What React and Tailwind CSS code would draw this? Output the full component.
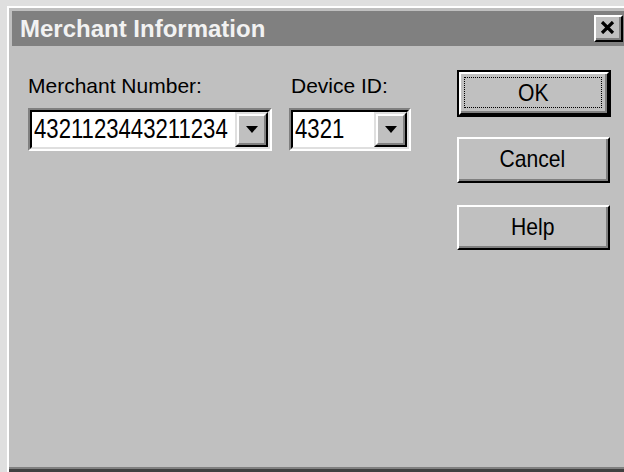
import React from 'react';

const sans = { fontFamily: '"Liberation Sans", Arial, sans-serif' };

function DropArrow() {
  return (
    <div className="flex h-full w-[33px] shrink-0 items-center justify-center border-t-2 border-l-2 border-t-[#dfdfdf] border-l-[#dfdfdf] border-b-2 border-r-2 border-b-black border-r-black bg-[#c0c0c0]">
      <div className="flex h-full w-full items-center justify-center border-t-2 border-l-2 border-t-white border-l-white border-b-2 border-r-2 border-b-[#808080] border-r-[#808080]">
        <svg width="12" height="7" viewBox="0 0 12 7">
          <polygon points="0,0 12,0 6,7" fill="#000" />
        </svg>
      </div>
    </div>
  );
}

function Combo({ value, width }) {
  return (
    <div className={`${width} h-[43px] border-t-2 border-l-2 border-t-[#808080] border-l-[#808080] border-b-2 border-r-2 border-b-white border-r-white`}>
      <div className="flex h-full border-t-2 border-l-2 border-t-black border-l-black border-b-2 border-r-2 border-b-[#dfdfdf] border-r-[#dfdfdf] bg-white">
        <div className="flex flex-1 items-center overflow-hidden pl-[2px]">
          <span className="inline-block origin-left scale-x-[0.82] text-[27px] leading-none text-black">{value}</span>
        </div>
        <DropArrow />
      </div>
    </div>
  );
}

function PushButton({ label, isDefault, className }) {
  const face = (
    <div className="flex h-full w-full border-t-2 border-l-2 border-t-white border-l-white border-b-2 border-r-2 border-b-black border-r-black bg-[#c0c0c0]">
      <div className="flex h-full w-full border-b-2 border-r-2 border-b-[#808080] border-r-[#808080] p-[3px]">
        <div className={`flex h-full w-full items-center justify-center ${isDefault ? 'border border-dotted border-black' : ''}`}>
          <span className="inline-block scale-x-[0.88] text-[24px] leading-none text-black">{label}</span>
        </div>
      </div>
    </div>
  );
  if (isDefault) {
    return <div className={`w-[154px] border-2 border-black ${className}`}>{face}</div>;
  }
  return <div className={`w-[153px] ${className}`}>{face}</div>;
}

export default function App() {
  return (
    <div className="h-[472px] w-[624px] overflow-hidden bg-[#dfdfdf] pl-[7px] pt-[6px]" style={sans}>
      <div className="flex h-[466px] w-[640px] flex-col border-t-2 border-l-2 border-white bg-[#c0c0c0] pl-[3px] pt-[3px] shadow-[inset_0_-3px_0_#404040,inset_0_-5px_0_#808080]">
        {/* title bar */}
        <div className="flex h-[35px] w-[618px] items-center justify-between bg-[#808080] pl-[8px] pr-[7px]">
          <span className="text-[24px] font-bold leading-none text-[#f2f2f2]">Merchant Information</span>
          <div className="h-[27px] w-[29px] border-t-2 border-l-2 border-t-white border-l-white border-b-2 border-r-2 border-b-black border-r-black bg-[#c0c0c0]">
            <div className="flex h-full w-full items-center justify-center border-b-2 border-r-2 border-b-[#808080] border-r-[#808080]">
              <svg width="15" height="13" viewBox="0 0 15 13">
                <path d="M2 1 L13 12 M13 1 L2 12" stroke="#000" strokeWidth="3.2" />
              </svg>
            </div>
          </div>
        </div>

        {/* dialog body */}
        <div className="flex flex-1 pl-[16px] pt-[24px]">
          <div className="flex gap-[17px]">
            <div className="flex flex-col">
              <span className="mt-[4px] h-[24px] text-[21px] leading-[24px] text-black">Merchant Number:</span>
              <div className="mt-[10px]">
                <Combo value="4321123443211234" width="w-[244px]" />
              </div>
            </div>
            <div className="flex flex-col">
              <span className="mt-[4px] h-[24px] pl-[2px] text-[21px] leading-[24px] text-black">Device ID:</span>
              <div className="mt-[10px]">
                <Combo value="4321" width="w-[122px]" />
              </div>
            </div>
          </div>

          <div className="ml-[46px] flex flex-col">
            <PushButton label="OK" isDefault className="h-[47px]" />
            <PushButton label="Cancel" className="mt-[20px] h-[46px]" />
            <PushButton label="Help" className="mt-[22px] h-[45px]" />
          </div>
        </div>
      </div>
    </div>
  );
}
